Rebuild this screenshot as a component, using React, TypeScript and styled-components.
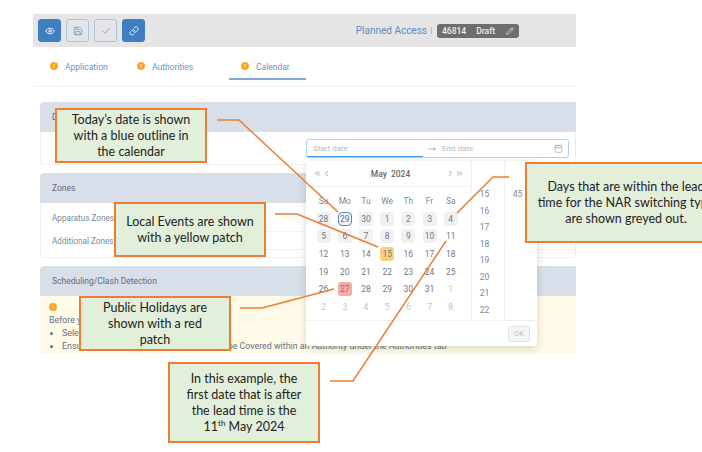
import React from 'react'
import styled, { createGlobalStyle } from 'styled-components'
import { Calendar as CalendarIcon, Check, ChevronLeft, ChevronRight, ChevronsLeft, ChevronsRight, Eye, Link, MoveRight, Pencil, Save } from 'lucide-react'

const GlobalStyle = createGlobalStyle`
  html, body {
    margin: 0;
    padding: 0;
    background: #fff;
  }
  body {
    font-family: Roboto, "Liberation Sans", sans-serif;
  }
`

const Page = styled.div`
  position: relative;
  width: 702px;
  height: 452px;
  overflow: hidden;
  padding: 14px 126px 0 33px;
  box-sizing: border-box;
`

const Toolbar = styled.div`
  display: flex;
  align-items: center;
  justify-content: space-between;
  height: 33px;
  padding: 0 57px 0 5px;
  background: #e5e5e5;
`

const ToolGroup = styled.div`
  display: flex;
  gap: 5px;
`

const ToolButton = styled.div<{ $solid?: boolean }>`
  display: flex;
  align-items: center;
  justify-content: center;
  width: 23px;
  height: 23px;
  border-radius: 3px;
  box-sizing: border-box;
  color: ${p => (p.$solid ? '#fff' : '#6f96c2')};
  background: ${p => (p.$solid ? '#3f7fc1' : '#e3e5e8')};
  border: 1px solid ${p => (p.$solid ? '#3f7fc1' : '#adc3dc')};
`

const TitleGroup = styled.div`
  display: flex;
  align-items: center;
  gap: 4px;
`

const Title = styled.span`
  color: #5b8cc6;
  font-size: 10px;
`

const TitleBar = styled.span`
  width: 1px;
  height: 7px;
  background: #a9bfd8;
`

const Badge = styled.div`
  display: flex;
  align-items: center;
  height: 14px;
  width: 82px;
  margin-left: 1px;
  padding: 0 5px;
  box-sizing: border-box;
  border-radius: 3px;
  background: #6e6e6e;
  color: #eee;
  font-size: 8.5px;
  font-weight: 500;
`

const BadgeState = styled.span`
  margin-left: 10px;
  flex: 1;
`

const Tabs = styled.div`
  display: flex;
  height: 39px;
  border-bottom: 1px solid #f0f0f0;
`

const Tab = styled.div<{ $active?: boolean; $width: number }>`
  display: flex;
  align-items: center;
  gap: 7px;
  width: ${p => p.$width}px;
  height: 33px;
  padding: 9px 0 0 ${p => (p.$active ? 12 : 17)}px;
  box-sizing: border-box;
  color: #6a94c8;
  font-size: 8.5px;
  border-bottom: 2px solid ${p => (p.$active ? '#7fa8d6' : 'transparent')};
`

const Dot = styled.span`
  display: flex;
  align-items: center;
  justify-content: center;
  width: 8px;
  height: 8px;
  margin-top: -3px;
  border-radius: 50%;
  background: #f8a91f;
  color: #fff;
  font-size: 6px;
  line-height: 1;
`

const Content = styled.div`
  display: flex;
  flex-direction: column;
  gap: 8px;
  padding: 15px 0 0 7px;
`

const Card = styled.section<{ $height: number }>`
  height: ${p => p.$height}px;
  display: flex;
  flex-direction: column;
`

const CardHeader = styled.div`
  display: flex;
  align-items: center;
  flex: 0 0 30px;
  padding-left: 12px;
  background: #d9dfe8;
  border-radius: 4px 0 0 0;
  color: #5f6b7a;
  font-size: 8.5px;
`

const CardBody = styled.div`
  flex: 1;
  box-sizing: border-box;
  border: 1px solid #eeeeee;
  border-top: 0;
  border-radius: 0 0 4px 4px;
`

const ZoneRow = styled.div<{ $height: number }>`
  display: flex;
  height: ${p => p.$height}px;
  padding-left: 11px;
`

const ZoneLabel = styled.div`
  display: flex;
  align-items: center;
  width: 64px;
  color: #7a8799;
  font-size: 8.2px;
`

const ZoneField = styled.div`
  flex: 1;
  border-bottom: 1px solid #f0f0f0;
`

const Notice = styled.div`
  flex: 1;
  padding: 7px 0 0 9px;
  background: #fffbe8;
  color: #66707c;
  font-size: 8.85px;
  line-height: 13px;
`

const NoticeDot = styled(Dot)`
  margin: 0 0 3px;
`

const NoticeList = styled.ul`
  margin: 0;
  padding: 0 0 0 13px;
`

const RangeInput = styled.div`
  position: absolute;
  left: 306px;
  top: 139px;
  width: 263px;
  height: 19px;
  box-sizing: border-box;
  display: flex;
  align-items: center;
  padding: 0 5px 0 6px;
  background: #fff;
  border: 1px solid #a8d4fb;
  border-radius: 3px;
  color: #b9b9b9;
  font-size: 8px;

  &::after {
    content: '';
    position: absolute;
    left: 0;
    bottom: 0;
    width: 116px;
    height: 1px;
    background: #3d9bf0;
  }
`

const RangeStart = styled.span`
  width: 115px;
`

const RangeEnd = styled.span`
  flex: 1;
  margin-left: 6px;
`

const Popup = styled.div`
  position: absolute;
  left: 306px;
  top: 161px;
  width: 231px;
  height: 185px;
  display: flex;
  flex-direction: column;
  background: #fff;
  border-radius: 3px;
  box-shadow: 0 2px 8px rgba(0, 0, 0, 0.16);
`

const PopupMain = styled.div`
  display: flex;
  flex: 1;
  border-bottom: 1px solid #f0f0f0;
`

const CalendarPane = styled.div`
  width: 166px;
  border-right: 1px solid #f0f0f0;
  box-sizing: border-box;
`

const CalendarHeader = styled.div`
  display: flex;
  align-items: center;
  height: 25px;
  padding: 0 7px 0 7px;
  border-bottom: 1px solid #f0f0f0;
  color: #8a8a8a;
`

const MonthLabel = styled.div`
  flex: 1;
  text-align: center;
  padding-left: 4px;
  color: #5f6670;
  font-size: 8.5px;
  font-weight: 500;
  word-spacing: 2px;
`

const DayGrid = styled.div`
  display: grid;
  grid-template-columns: repeat(7, 21.2px);
  grid-auto-rows: 17.7px;
  justify-items: center;
  align-items: center;
  padding: 5px 0 0 7px;
`

const WeekDay = styled.div`
  color: #7d8794;
  font-size: 8.5px;
`

type DayKind = 'lead' | 'plain' | 'muted' | 'today' | 'event' | 'holiday'

const dayBackground: Record<DayKind, string> = {
  lead: '#f2f1f1',
  plain: 'transparent',
  muted: 'transparent',
  today: '#f2f1f1',
  event: '#f8d27a',
  holiday: '#f7aba3',
}

const Day = styled.div<{ $kind: DayKind }>`
  display: flex;
  align-items: center;
  justify-content: center;
  width: 14px;
  height: 14px;
  box-sizing: border-box;
  border-radius: ${p => (p.$kind === 'today' ? 4 : 3)}px;
  font-size: 8.5px;
  color: ${p => (p.$kind === 'muted' ? '#c4c4c4' : '#6f7884')};
  background: ${p => dayBackground[p.$kind]};
  border: ${p => (p.$kind === 'today' ? '1px solid #5b88d0' : '0')};
`

const TimeColumn = styled.div<{ $width: number; $bordered?: boolean }>`
  width: ${p => p.$width}px;
  box-sizing: border-box;
  padding: 25px 7px 0 0;
  text-align: center;
  color: #7d8794;
  font-size: 8.5px;
  border-right: ${p => (p.$bordered ? '1px solid #f0f0f0' : '0')};
`

const TimeCell = styled.div`
  height: 16.5px;
  line-height: 16.5px;
`

const PopupFooter = styled.div`
  display: flex;
  align-items: center;
  justify-content: flex-end;
  height: 25px;
  padding-right: 7px;
`

const OkButton = styled.div`
  display: flex;
  align-items: center;
  justify-content: center;
  width: 20px;
  height: 14px;
  border: 1px solid #e4e4e4;
  border-radius: 3px;
  background: #f5f5f5;
  color: #bdbdbd;
  font-size: 7.5px;
`

const Connectors = styled.svg`
  position: absolute;
  left: 0;
  top: 0;
  pointer-events: none;
`

const Callout = styled.div<{ $left: number; $top: number; $width: number; $height: number }>`
  position: absolute;
  left: ${p => p.$left}px;
  top: ${p => p.$top}px;
  width: ${p => p.$width}px;
  height: ${p => p.$height}px;
  box-sizing: border-box;
  display: flex;
  align-items: center;
  justify-content: center;
  background: #e2efda;
  border: 2px solid #ed7d31;
  color: #222;
  font-family: Lato, "Liberation Sans", sans-serif;
  font-size: 12.5px;
  line-height: 16px;
  text-align: center;
  white-space: nowrap;
`

const Sup = styled.sup`
  font-size: 8px;
  line-height: 0;
`

const weekDays = ['Su', 'Mo', 'Tu', 'We', 'Th', 'Fr', 'Sa']

const days: [string, DayKind][] = [
  ['28', 'lead'], ['29', 'today'], ['30', 'lead'], ['1', 'lead'], ['2', 'lead'], ['3', 'lead'], ['4', 'lead'],
  ['5', 'lead'], ['6', 'lead'], ['7', 'lead'], ['8', 'lead'], ['9', 'lead'], ['10', 'lead'], ['11', 'plain'],
  ['12', 'plain'], ['13', 'plain'], ['14', 'plain'], ['15', 'event'], ['16', 'plain'], ['17', 'plain'], ['18', 'plain'],
  ['19', 'plain'], ['20', 'plain'], ['21', 'plain'], ['22', 'plain'], ['23', 'plain'], ['24', 'plain'], ['25', 'plain'],
  ['26', 'plain'], ['27', 'holiday'], ['28', 'plain'], ['29', 'plain'], ['30', 'plain'], ['31', 'plain'], ['1', 'muted'],
  ['2', 'muted'], ['3', 'muted'], ['4', 'muted'], ['5', 'muted'], ['6', 'muted'], ['7', 'muted'], ['8', 'muted'],
]

const hours = [15, 16, 17, 18, 19, 20, 21, 22]

const App: React.FC = () => (
  <>
    <GlobalStyle />
    <Page>
      <Toolbar>
        <ToolGroup>
          <ToolButton $solid><Eye size={10} /></ToolButton>
          <ToolButton><Save size={10} /></ToolButton>
          <ToolButton><Check size={10} /></ToolButton>
          <ToolButton $solid><Link size={10} /></ToolButton>
        </ToolGroup>
        <TitleGroup>
          <Title>Planned Access</Title>
          <TitleBar />
          <Badge>
            46814
            <BadgeState>Draft</BadgeState>
            <Pencil size={8} />
          </Badge>
        </TitleGroup>
      </Toolbar>

      <Tabs>
        <Tab $width={87}><Dot>!</Dot>Application</Tab>
        <Tab $width={109}><Dot>!</Dot>Authorities</Tab>
        <Tab $width={77} $active><Dot>!</Dot>Calendar</Tab>
      </Tabs>

      <Content>
        <Card $height={63}>
          <CardHeader>Dates</CardHeader>
          <CardBody />
        </Card>
        <Card $height={85}>
          <CardHeader>Zones</CardHeader>
          <CardBody>
            <ZoneRow $height={29}>
              <ZoneLabel>Apparatus Zones</ZoneLabel>
              <ZoneField />
            </ZoneRow>
            <ZoneRow $height={18}>
              <ZoneLabel>Additional Zones</ZoneLabel>
              <ZoneField />
            </ZoneRow>
          </CardBody>
        </Card>
        <Card $height={88}>
          <CardHeader>Scheduling/Clash Detection</CardHeader>
          <Notice>
            <NoticeDot>!</NoticeDot>
            Before you submit
            <NoticeList>
              <li>Select the dates</li>
              <li>Ensure you have included all Apparatus to be Covered within an Authority under the Authorities tab</li>
            </NoticeList>
          </Notice>
        </Card>
      </Content>

      <RangeInput>
        <RangeStart>Start date</RangeStart>
        <MoveRight size={8} color="#8c8c8c" />
        <RangeEnd>End date</RangeEnd>
        <CalendarIcon size={9} color="#a8a8a8" />
      </RangeInput>

      <Popup>
        <PopupMain>
          <CalendarPane>
            <CalendarHeader>
              <ChevronsLeft size={9} />
              <ChevronLeft size={9} />
              <MonthLabel>May 2024</MonthLabel>
              <ChevronRight size={9} />
              <ChevronsRight size={9} />
            </CalendarHeader>
            <DayGrid>
              {weekDays.map(d => <WeekDay key={d}>{d}</WeekDay>)}
              {days.map(([label, kind], i) => <Day key={i} $kind={kind}>{label}</Day>)}
            </DayGrid>
          </CalendarPane>
          <TimeColumn $width={33} $bordered>
            {hours.map(h => <TimeCell key={h}>{h}</TimeCell>)}
          </TimeColumn>
          <TimeColumn $width={32}>
            <TimeCell>45</TimeCell>
          </TimeColumn>
        </PopupMain>
        <PopupFooter><OkButton>OK</OkButton></PopupFooter>
      </Popup>

      <Connectors width={702} height={452} fill="none" stroke="#ed7d31" strokeWidth={1.5}>
        <polyline points="217,120 239,120 338,212" />
        <polyline points="275,214 297,214 378,247" />
        <polyline points="240,308 262,308 334,289" />
        <polyline points="330,381 353,381 446,241" />
        <polyline points="509,177 493,177 457,213" />
      </Connectors>

      <Callout $left={55} $top={108} $width={152} $height={55}>
        <div>Today’s date is shown<br />with a blue outline in<br />the calendar</div>
      </Callout>
      <Callout $left={114} $top={202} $width={152} $height={55}>
        <div>Local Events are shown<br />with a yellow patch</div>
      </Callout>
      <Callout $left={79} $top={296} $width={152} $height={55}>
        <div>Public Holidays are<br />shown with a red<br />patch</div>
      </Callout>
      <Callout $left={168} $top={362} $width={152} $height={81}>
        <div>In this example, the<br />first date that is after<br />the lead time is the<br />11<Sup>th</Sup> May 2024</div>
      </Callout>
      <Callout $left={525} $top={162} $width={202} $height={81}>
        <div>Days that are within the lead<br />time for the NAR switching type<br />are shown greyed out.</div>
      </Callout>
    </Page>
  </>
)

export default App
